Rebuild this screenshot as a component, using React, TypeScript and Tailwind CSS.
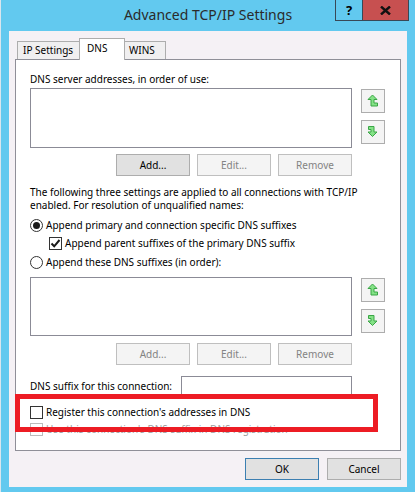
import React from "react";

function Button({ label, disabled = false, primary = false }: { label: string; disabled?: boolean; primary?: boolean }) {
  const cls = disabled
    ? "border-[#bfbfbf] bg-[#f4f4f4] text-[#838383]"
    : primary
    ? "border-[#3c7fb1] bg-[#e1e1e1] text-black"
    : "border-[#adadad] bg-[#e1e1e1] text-black";
  return (
    <div className={`flex h-[22px] w-[74px] items-center justify-center border text-[10px] ${cls}`}>
      {label}
    </div>
  );
}

function ArrowUp() {
  return (
    <div className="flex h-[24px] w-[24px] items-center justify-center border border-[#adadad] bg-[#f4f4f4]">
      <svg width="22" height="22" viewBox="1 1 22 22">
        <polygon
          points="11.5,6 16,10.5 13,10.5 13,14 16.5,14 16.5,17 10,17 10,10.5 7,10.5"
          fill="#84e286"
          stroke="#3aa646"
          strokeWidth="1"
          strokeLinejoin="miter"
        />
      </svg>
    </div>
  );
}

function ArrowDown() {
  return (
    <div className="flex h-[24px] w-[24px] items-center justify-center border border-[#adadad] bg-[#f4f4f4]">
      <svg width="22" height="22" viewBox="1 1 22 22">
        <polygon
          points="7.5,6.5 13,6.5 13,12 16,12 11.5,16.5 7,12 10,12 10,9.5 7.5,9.5"
          fill="#84e286"
          stroke="#3aa646"
          strokeWidth="1"
          strokeLinejoin="miter"
        />
      </svg>
    </div>
  );
}

function Radio({ checked }: { checked: boolean }) {
  return (
    <div className="flex h-[13px] w-[13px] items-center justify-center rounded-full border border-[#333333] bg-white">
      {checked && <div className="h-[7px] w-[7px] rounded-full bg-[#1a1a1a]" />}
    </div>
  );
}

function Check({ checked, disabled = false }: { checked: boolean; disabled?: boolean }) {
  return (
    <div
      className={`flex h-[13px] w-[13px] items-center justify-center border bg-white ${
        disabled ? "border-[#bcbcbc]" : "border-[#333333]"
      }`}
    >
      {checked && (
        <svg width="11" height="11" viewBox="0 0 11 11">
          <path d="M1.5 5.5 L4.2 8.3 L9.5 2" fill="none" stroke="#1a1a1a" strokeWidth="2" />
        </svg>
      )}
    </div>
  );
}

function ListRow({ height }: { height: number }) {
  return (
    <div className="flex">
      <div className="w-[322px] border border-[#8b8b96] bg-white" style={{ height }} />
      <div className="ml-[9px] mt-[1px] flex flex-col gap-[7px]">
        <ArrowUp />
        <ArrowDown />
      </div>
    </div>
  );
}

export default function App() {
  return (
    <div className="flex h-[492px] w-[415px] flex-col border-l border-[#d9e6ee] bg-[#62c9ef] font-['Noto_Sans',sans-serif] text-black">
      {/* title bar */}
      <div className="grid h-[31px] grid-cols-[1fr_auto_1fr]">
        <div />
        <div className="pt-[4px] text-[14px] leading-[22px] text-[#2b2b2b]">Advanced TCP/IP Settings</div>
        <div className="flex justify-end pr-[6px]">
          <div className="flex h-[21px] border-x border-b border-[#384856]">
            <div className="flex w-[27px] items-center justify-center border-r border-[#384856] text-[13px] font-bold leading-none">
              ?
            </div>
            <div className="flex w-[45px] items-center justify-center bg-[#c75050]">
              <svg width="11" height="9" viewBox="0 0 11 9">
                <path d="M1 0.5 L10 8.5 M10 0.5 L1 8.5" stroke="#111" strokeWidth="2.4" />
              </svg>
            </div>
          </div>
        </div>
      </div>

      {/* client area */}
      <div className="ml-[8px] flex h-[456px] w-[398px] flex-col bg-[#f5f1f5] pl-[6px] pt-[7px]">
        {/* tabs */}
        <div className="flex h-[21px] items-end pl-[2px] text-[10px]">
          <div className="flex h-[18px] w-[62px] items-center border-l border-t border-[#adadad] bg-[#f0eff0] pl-[5px]">
            IP Settings
          </div>
          <div className="relative z-10 -mb-px flex h-[22px] w-[46px] items-start border-x border-t border-[#adadad] bg-white pl-[7px] pt-[2px]">
            DNS
          </div>
          <div className="flex h-[18px] w-[41px] items-center border-r border-t border-[#adadad] bg-[#f0eff0] pl-[4px]">
            WINS
          </div>
        </div>

        {/* panel */}
        <div className="relative flex h-[392px] w-[386px] flex-col border border-[#8f8f98] bg-white pl-[14px] text-[10px]">
          <div className="mt-[13px] h-[13px] leading-[13px]">DNS server addresses, in order of use:</div>
          <div className="mt-[2px]">
            <ListRow height={60} />
          </div>
          <div className="mt-[6px] flex w-[322px] justify-end gap-[7px]">
            <Button label="Add..." />
            <Button label="Edit..." disabled />
            <Button label="Remove" disabled />
          </div>
          <div className="mt-[10px] flex flex-col">
            <div className="h-[13px] leading-[13px]">
              The following three settings are applied to all connections with TCP/IP
            </div>
            <div className="h-[13px] leading-[13px]">enabled. For resolution of unqualified names:</div>
          </div>
          <div className="mt-[5px] flex h-[16px] items-center gap-[3px]">
            <Radio checked />
            <span>Append primary and connection specific DNS suffixes</span>
          </div>
          <div className="mt-[2px] flex h-[16px] items-center gap-[3px] pl-[19px]">
            <Check checked />
            <span>Append parent suffixes of the primary DNS suffix</span>
          </div>
          <div className="mt-[3px] flex h-[16px] items-center gap-[3px]">
            <Radio checked={false} />
            <span>Append these DNS suffixes (in order):</span>
          </div>
          <div className="mt-[7px]">
            <ListRow height={59} />
          </div>
          <div className="mt-[7px] flex w-[322px] justify-end gap-[7px]">
            <Button label="Add..." disabled />
            <Button label="Edit..." disabled />
            <Button label="Remove" disabled />
          </div>
          <div className="mt-[11px] flex h-[20px] w-[322px] items-center justify-between">
            <span>DNS suffix for this connection:</span>
            <div className="h-[20px] w-[171px] border border-[#8b8b96] bg-white" />
          </div>
          <div className="mt-[9px] flex h-[14px] items-center gap-[3px]">
            <Check checked={false} />
            <span>Register this connection&apos;s addresses in DNS</span>
          </div>
          <div className="mt-[3px] flex h-[14px] items-center gap-[3px] text-[#a0a0a0]">
            <Check checked={false} disabled />
            <span>Use this connection&apos;s DNS suffix in DNS registration</span>
          </div>

          {/* red annotation */}
          <div className="absolute left-[-1px] top-[334px] h-[38px] w-[363px] border-[5px] border-[#ed1c24]" />
        </div>

        {/* OK / Cancel */}
        <div className="mt-[7px] flex w-[386px] justify-end gap-[8px]">
          <Button label="OK" primary />
          <Button label="Cancel" />
        </div>
      </div>
    </div>
  );
}
